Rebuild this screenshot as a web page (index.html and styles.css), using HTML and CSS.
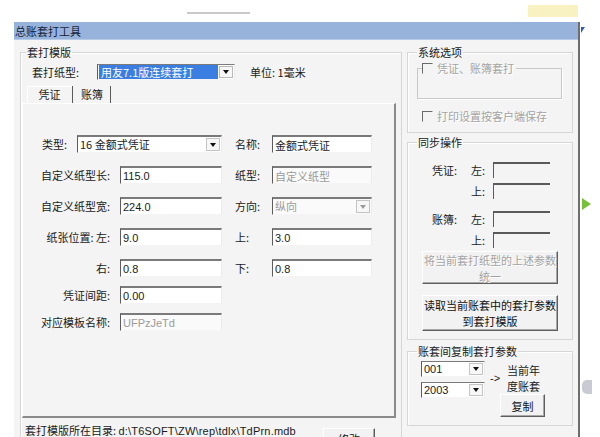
FILE: index.html
```html
<!DOCTYPE html>
<html lang="zh-CN">
<head>
    <meta charset="UTF-8">
    <title>总账套打工具</title>
    <link rel="stylesheet" href="styles.css">
</head>
<body>
    <div class="top">
        <span class="top-line"></span>
        <span class="top-note"></span>
    </div>

    <div class="desk">
        <div class="window">
            <div class="titlebar">总账套打工具</div>

            <div class="client">
                <fieldset class="group group-main">
                    <legend>套打模版</legend>

                    <div class="paper-row">
                        <span class="paper-label">套打纸型:</span>
                        <div class="combo combo-paper">
                            <span class="combo-text selected">用友7.1版连续套打</span>
                            <span class="combo-btn"><i class="arrow"></i></span>
                        </div>
                        <span class="unit">单位: 1毫米</span>
                    </div>

                    <div class="tabs">
                        <span class="tab active">凭证</span>
                        <span class="tab">账簿</span>
                    </div>

                    <div class="tab-panel">
                        <div class="row">
                            <div class="cell">
                                <span class="lbl lbl-short">类型:</span>
                                <div class="combo">
                                    <span class="combo-text">16 金额式凭证</span>
                                    <span class="combo-btn"><i class="arrow"></i></span>
                                </div>
                            </div>
                            <div class="cell cell-right">
                                <span class="lbl-right">名称:</span>
                                <input class="field" value="金额式凭证" readonly>
                            </div>
                        </div>

                        <div class="row">
                            <div class="cell">
                                <span class="lbl">自定义纸型长:</span>
                                <input class="field" value="115.0" readonly>
                            </div>
                            <div class="cell cell-right">
                                <span class="lbl-right">纸型:</span>
                                <input class="field" value="自定义纸型" disabled>
                            </div>
                        </div>

                        <div class="row">
                            <div class="cell">
                                <span class="lbl">自定义纸型宽:</span>
                                <input class="field" value="224.0" readonly>
                            </div>
                            <div class="cell cell-right">
                                <span class="lbl-right">方向:</span>
                                <div class="combo combo-off">
                                    <span class="combo-text">纵向</span>
                                    <span class="combo-btn"><i class="arrow"></i></span>
                                </div>
                            </div>
                        </div>

                        <div class="row">
                            <div class="cell">
                                <span class="lbl">纸张位置: 左:</span>
                                <input class="field" value="9.0" readonly>
                            </div>
                            <div class="cell cell-right">
                                <span class="lbl-right">上:</span>
                                <input class="field" value="3.0" readonly>
                            </div>
                        </div>

                        <div class="row">
                            <div class="cell">
                                <span class="lbl">右:</span>
                                <input class="field" value="0.8" readonly>
                            </div>
                            <div class="cell cell-right">
                                <span class="lbl-right">下:</span>
                                <input class="field" value="0.8" readonly>
                            </div>
                        </div>

                        <div class="row tight">
                            <div class="cell">
                                <span class="lbl">凭证间距:</span>
                                <input class="field" value="0.00" readonly>
                            </div>
                        </div>

                        <div class="row tight">
                            <div class="cell">
                                <span class="lbl">对应模板名称:</span>
                                <input class="field" value="UFPzJeTd" disabled>
                            </div>
                        </div>
                    </div>

                    <div class="path-row">
                        <span class="path-text">套打模版所在目录: <span class="path">d:\T6SOFT\ZW\rep\tdlx\TdPrn.mdb</span></span>
                        <button class="btn btn-edit">修改</button>
                    </div>
                </fieldset>

                <div class="side">
                    <fieldset class="group group-options">
                        <legend>系统选项</legend>
                        <fieldset class="inner-group">
                            <legend><span class="check"></span><span class="off">凭证、账簿套打</span></legend>
                        </fieldset>
                        <div class="check-row">
                            <span class="check"></span><span class="off">打印设置按客户端保存</span>
                        </div>
                    </fieldset>

                    <fieldset class="group group-sync">
                        <legend>同步操作</legend>
                        <div class="sync-row first">
                            <span class="sync-name">凭证:</span>
                            <span class="sync-side">左:</span>
                            <span class="sync-box"></span>
                        </div>
                        <div class="sync-row">
                            <span class="sync-name"></span>
                            <span class="sync-side">上:</span>
                            <span class="sync-box"></span>
                        </div>
                        <div class="sync-row gap">
                            <span class="sync-name">账簿:</span>
                            <span class="sync-side">左:</span>
                            <span class="sync-box"></span>
                        </div>
                        <div class="sync-row">
                            <span class="sync-name"></span>
                            <span class="sync-side">上:</span>
                            <span class="sync-box"></span>
                        </div>
                        <button class="btn btn-wide btn-unify" disabled>将当前套打纸型的上述参数<br>统一</button>
                        <button class="btn btn-wide btn-read">读取当前账套中的套打参数<br>到套打模版</button>
                    </fieldset>

                    <fieldset class="group group-copy">
                        <legend>账套间复制套打参数</legend>
                        <div class="copy-row">
                            <div class="copy-selects">
                                <div class="combo combo-small">
                                    <span class="combo-text">001</span>
                                    <span class="combo-btn"><i class="arrow"></i></span>
                                </div>
                                <div class="combo combo-small">
                                    <span class="combo-text">2003</span>
                                    <span class="combo-btn"><i class="arrow"></i></span>
                                </div>
                            </div>
                            <div class="copy-target">
                                <div class="target-line">
                                    <span class="to">-&gt;</span>
                                    <span class="target-name">当前年<br>度账套</span>
                                </div>
                                <button class="btn btn-copy">复制</button>
                            </div>
                        </div>
                    </fieldset>
                </div>
            </div>
        </div>

        <div class="edge">
            <span class="edge-cursor"></span>
            <span class="edge-arrow"></span>
            <span class="edge-blob"></span>
        </div>
    </div>
</body>
</html>
```

FILE: styles.css
```css
html, body {
    margin: 0;
    height: 437px;
    overflow: hidden;
}
body {
    background-color: #fff;
    font-family: "Noto Sans CJK SC", sans-serif;
    font-size: 11px;
    line-height: 14px;
    color: #1a1a1a;
}

/* desktop bits around the dialog */
.top {
    display: flex;
    height: 22px;
}
.top-line {
    margin: 12px 0 0 187px;
    width: 63px;
    height: 2px;
    background-color: #c9c9c9;
}
.top-note {
    margin: 5px 0 0 278px;
    width: 50px;
    height: 12px;
    background-color: #f8f1c2;
}
.desk {
    display: flex;
}
.edge {
    display: flex;
    flex-direction: column;
    width: 20px;
}
.edge-cursor {
    margin: 5px 0 0 1px;
    width: 0;
    height: 0;
    border-left: 4px solid #2c5fa0;
    border-bottom: 6px solid transparent;
}
.edge-arrow {
    margin: 165px 0 0 2px;
    width: 0;
    height: 0;
    border-left: 9px solid #78bf3a;
    border-top: 6px solid transparent;
    border-bottom: 6px solid transparent;
}
.edge-blob {
    margin: 170px 0 0 2px;
    width: 10px;
    height: 14px;
    border-radius: 5px 0 0 5px;
    background-color: #c8ccd2;
}

/* dialog window */
.window {
    margin-left: 14px;
    width: 564px;
    border-right: 2px solid #6e6e6e;
    background-color: #f4f4f4;
}
.titlebar {
    height: 18px;
    line-height: 18px;
    padding-left: 1px;
    background-color: #97b3dc;
    border-bottom: 1px solid #b8cbe6;
    box-sizing: border-box;
    color: #141e36;
}
.client {
    display: flex;
    gap: 5px;
    padding: 5px 5px 0 6px;
}

.group {
    margin: 0;
    padding: 0;
    min-width: 0;
    border: 1px solid #d6d6d6;
    box-shadow: inset 1px 1px 0 #fff;
}
.group legend {
    padding: 0 1px;
    line-height: 14px;
}
.group-main {
    width: 382px;
    box-sizing: border-box;
}
.group-main > legend {
    margin-left: 5px;
}

.paper-row {
    display: flex;
    align-items: center;
    height: 16px;
    margin-top: 5px;
    padding-left: 11px;
}
.paper-label {
    width: 65px;
}
.unit {
    margin-left: 15px;
}

/* combo boxes */
.combo {
    display: flex;
    flex: 1;
    height: 18px;
    box-sizing: border-box;
    border: 1px solid;
    border-color: #7a7a7a #ececec #f4f4f4 #5c5c5c;
    border-top-width: 2px;
    background-color: #fff;
}
.combo-text {
    flex: 1;
    padding-left: 2px;
    line-height: 15px;
    white-space: nowrap;
}
.combo-btn {
    display: flex;
    align-items: center;
    justify-content: center;
    width: 12px;
    margin: 1px 1px 1px 0;
    border: 1px solid #c4c4c4;
    background-color: #f7f7f7;
}
.arrow {
    width: 0;
    height: 0;
    border-top: 4px solid #111;
    border-left: 3px solid transparent;
    border-right: 3px solid transparent;
}
.combo-paper {
    flex: none;
    width: 138px;
    height: 16px;
    border-top-width: 1px;
}
.combo-paper .combo-text {
    margin: 0 1px 0 1px;
    background-color: #3a7ee2;
    color: #fff;
    line-height: 14px;
}
.combo-paper .combo-btn {
    width: 12px;
    border-color: #b8b8b8;
}
.combo-off {
    background-color: #fafafa;
}
.combo-off .combo-text {
    color: #9b9b9b;
}
.combo-off .arrow {
    border-top-color: #9a9a9a;
}
.combo-small {
    flex: none;
    width: 64px;
    height: 16px;
    border-top-width: 1px;
}
.combo-small .combo-text {
    font-family: "Liberation Sans", sans-serif;
    line-height: 14px;
}

/* tabs */
.tabs {
    display: flex;
    height: 17px;
    margin-top: 6px;
    padding-left: 6px;
}
.tab {
    width: 46px;
    text-align: center;
    line-height: 17px;
    border-right: 1px solid #5a5a5a;
    box-sizing: border-box;
}
.tab + .tab {
    width: 37px;
    margin-left: 1px;
}
.tab.active {
    box-shadow: inset 1px 1px 0 #fff;
}

.tab-panel {
    width: 374px;
    height: 315px;
    margin-left: 1px;
    box-sizing: border-box;
    padding: 31px 0 0 15px;
    border-top: 1px solid #fff;
    border-left: 1px solid #fff;
    border-right: 2px solid #8a8a8a;
    border-bottom: 2px solid #8a8a8a;
}
.row {
    display: flex;
    height: 18px;
    margin-top: 13px;
}
.row:first-child {
    margin-top: 0;
}
.row.tight {
    margin-top: 9px;
}
.cell {
    display: flex;
    align-items: center;
    width: 184px;
}
.cell-right {
    width: 137px;
    margin-left: 13px;
}
.lbl {
    width: 82px;
    padding-right: 10px;
    box-sizing: border-box;
    text-align: right;
    white-space: nowrap;
}
.lbl-short {
    width: 39px;
    padding-right: 10px;
}
.lbl-right {
    width: 37px;
}

.field {
    flex: 1;
    min-width: 0;
    height: 18px;
    margin: 0;
    padding: 0 2px;
    box-sizing: border-box;
    border: 1px solid;
    border-color: #7a7a7a #ececec #f4f4f4 #5c5c5c;
    border-top-width: 2px;
    background-color: #fff;
    font-family: "Liberation Sans", "Noto Sans CJK SC", sans-serif;
    font-size: 11px;
    color: #1a1a1a;
    outline: none;
}
.field:disabled {
    background-color: #fafafa;
    color: #9b9b9b;
}

.path-row {
    display: flex;
    margin-top: 5px;
    padding-left: 4px;
}
.path-text {
    width: 298px;
    white-space: nowrap;
}
.path {
    font-family: "Liberation Sans", sans-serif;
    font-size: 11px;
    letter-spacing: 0.2px;
}

/* buttons */
.btn {
    margin: 0;
    padding: 0;
    box-sizing: border-box;
    border: 1px solid;
    border-color: #fff #5e5e5e #5e5e5e #fff;
    box-shadow: inset -1px -1px 0 #a8a8a8;
    background-color: #f2f2f2;
    font-family: "Noto Sans CJK SC", sans-serif;
    font-size: 11px;
    line-height: 16px;
    color: #111;
}
.btn-edit {
    width: 52px;
    height: 22px;
    margin-top: 5px;
}

/* right column */
.side {
    display: flex;
    flex-direction: column;
    width: 166px;
}
.side .group legend {
    margin-left: 9px;
}
.group-options {
    height: 88px;
    box-sizing: border-box;
}
.inner-group {
    margin: 2px 10px 0 9px;
    padding: 0;
    min-width: 0;
    height: 38px;
    box-sizing: border-box;
    border: 1px solid #c8c8c8;
    box-shadow: 1px 1px 0 #fff;
}
.group .inner-group legend {
    display: flex;
    align-items: center;
    margin-left: 4px;
    padding: 0 2px 0 0;
}
.check {
    display: inline-block;
    width: 11px;
    height: 11px;
    margin-right: 4px;
    box-sizing: border-box;
    border: 1px solid;
    border-color: #6a6a6a #f4f4f4 #f4f4f4 #6a6a6a;
}
.off {
    color: #a3a3a3;
    text-shadow: 1px 1px 0 #fff;
}
.check-row {
    display: flex;
    align-items: center;
    margin-top: 10px;
    padding-left: 14px;
}

.group-sync {
    margin-top: 2px;
    padding-bottom: 8px;
}
.sync-row {
    display: flex;
    align-items: center;
    height: 16px;
    margin-top: 5px;
    padding-left: 24px;
}
.sync-row.first {
    margin-top: 13px;
}
.sync-row.gap {
    margin-top: 12px;
}
.sync-name {
    width: 39px;
}
.sync-side {
    width: 22px;
}
.sync-box {
    width: 57px;
    height: 16px;
    box-sizing: border-box;
    border-top: 2px solid #5a5a5a;
    border-left: 1px solid #5a5a5a;
}
.btn-wide {
    width: 136px;
    margin-left: 14px;
}
.btn-unify {
    height: 33px;
    margin-top: 3px;
    color: #a3a3a3;
    text-shadow: 1px 1px 0 #fff;
}
.btn-read {
    height: 36px;
    margin-top: 11px;
}

.group-copy {
    margin-top: 4px;
    padding-bottom: 8px;
}
.copy-row {
    display: flex;
    padding-left: 13px;
}
.copy-selects {
    display: flex;
    flex-direction: column;
    gap: 5px;
    margin-top: 3px;
}
.copy-target {
    display: flex;
    flex-direction: column;
    margin-left: 5px;
}
.target-line {
    display: flex;
    align-items: center;
    height: 30px;
    margin-top: 5px;
}
.to {
    width: 17px;
    font-family: "Liberation Sans", sans-serif;
}
.target-name {
    line-height: 16px;
}
.btn-copy {
    width: 45px;
    height: 23px;
    margin: 1px 0 0 10px;
}
```
